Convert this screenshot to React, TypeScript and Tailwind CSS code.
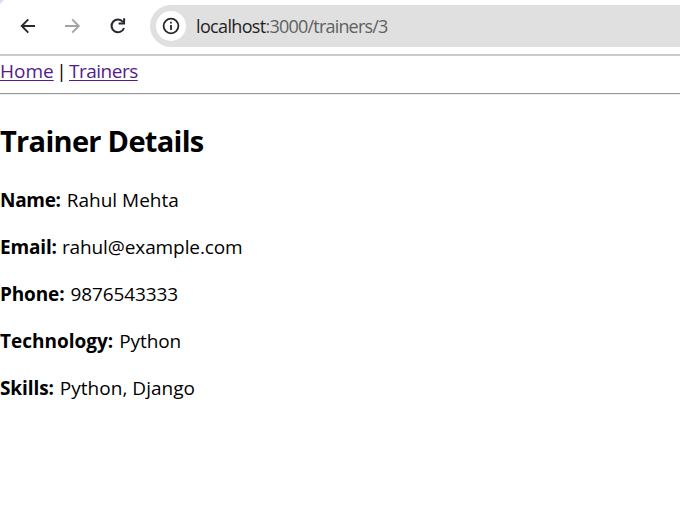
const details = [
  { label: 'Name:', value: 'Rahul Mehta', labelClass: 'tracking-[-0.3px] mr-[6px]', valueClass: 'tracking-[0px]' },
  { label: 'Email:', value: 'rahul@example.com', labelClass: 'tracking-[-0.15px] mr-[5px]', valueClass: 'tracking-[-0.1px]' },
  { label: 'Phone:', value: '9876543333', labelClass: 'tracking-[-0.15px] mr-[6px]', valueClass: 'tracking-[-0.1px]' },
  { label: 'Technology:', value: 'Python', labelClass: 'tracking-[0px] mr-[6px]', valueClass: 'tracking-[-0.1px]' },
  { label: 'Skills:', value: 'Python, Django', labelClass: 'tracking-[-0.1px] mr-[6px]', valueClass: 'tracking-[0.03px]' },
];

function Toolbar() {
  return (
    <header className="flex h-[56px] items-start border-b-2 border-[#cbcbcb] bg-[radial-gradient(circle_at_12px_12px,#ffffff_13.5px,#e6d4fb_15px)] bg-[length:12px_12px] bg-no-repeat">
      <div className="flex h-[51px] w-[150px] shrink-0 items-center">
        <svg className="ml-[20px]" width="16" height="16" viewBox="0 0 16 16" fill="none" stroke="#26282b" strokeWidth="1.9">
          <path d="M15 8H2M8.3 1.4 1.7 8l6.6 6.6" />
        </svg>
        <svg className="ml-[29px]" width="16" height="16" viewBox="0 0 16 16" fill="none" stroke="#a3a3a3" strokeWidth="1.9">
          <path d="M0 8h13.5M7.2 1.4 13.8 8l-6.6 6.6" />
        </svg>
        <svg className="ml-[28px]" width="18" height="18" viewBox="0 0 18 18" fill="none" stroke="#26282b" strokeWidth="2">
          <path d="M14.2 5.2A6.4 6.4 0 1 0 15 11" />
          <path d="M15.1 1.3v5.2H9.6" />
        </svg>
      </div>
      <div className="mt-[5px] flex h-[42px] flex-1 items-center rounded-l-full bg-[#e0e0e0] pl-[6px]">
        <span className="flex size-[30px] items-center justify-center rounded-full bg-white">
          <svg width="18" height="18" viewBox="0 0 18 18" fill="none" stroke="#26282b" strokeWidth="1.8">
            <circle cx="9" cy="9" r="7.4" />
            <path d="M9 8v5M9 4.8v1.8" />
          </svg>
        </span>
        <span className="ml-[10px] text-[18px] leading-[26px] tracking-[-0.8px] text-[#606060]">
          <span className="tracking-[-0.65px] text-[#1f1f1f]">localhost</span>:3000/trainers/3
        </span>
      </div>
    </header>
  );
}

export default function App() {
  return (
    <div className="h-[505px] w-[680px] overflow-hidden bg-white font-['Open_Sans','Noto_Sans',sans-serif] text-[19px] leading-[27px] text-black">
      <Toolbar />
      <nav className="flex h-[27px] pt-[2px]">
        <a href="#" className="h-[27px] w-[54px] whitespace-nowrap text-[#551a8b] underline decoration-1 underline-offset-2">Home</a>
        <span className="w-[15px] text-center">|</span>
        <a href="#" className="h-[27px] whitespace-nowrap tracking-[-0.5px] text-[#551a8b] underline decoration-1 underline-offset-2">Trainers</a>
      </nav>
      <hr className="mt-[10px] h-[2px] border-t border-b border-t-[#9a9a9a] border-b-[#eeeeee]" />
      <main>
        <h2 className="mt-[26px] text-[29px] leading-[40px] font-bold tracking-[-0.7px]">Trainer Details</h2>
        <div className="mt-[26px] flex flex-col gap-[20px]">
          {details.map((d) => (
            <p key={d.label} className="flex whitespace-nowrap">
              <strong className={d.labelClass}>{d.label}</strong>
              <span className={d.valueClass}>{d.value}</span>
            </p>
          ))}
        </div>
      </main>
    </div>
  );
}
